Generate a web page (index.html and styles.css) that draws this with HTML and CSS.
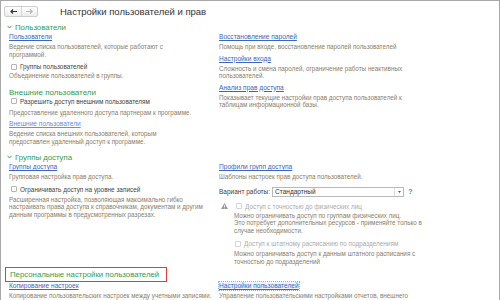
FILE: index.html
```html
<!DOCTYPE html>
<html lang="ru">
<head>
    <meta charset="UTF-8">
    <title>Настройки пользователей и прав</title>
    <link rel="stylesheet" href="styles.css">
</head>
<body>
    <div class="window">
        <!-- Top bar -->
        <div class="topbar">
            <div class="nav">
                <span class="nav-btn">
                    <svg width="7" height="5" viewBox="0 0 7 5"><path d="M7 2.5H1.5M3 0.5L1 2.5L3 4.5" fill="none" stroke="#333" stroke-width="1.2"/></svg>
                </span>
                <span class="nav-btn">
                    <svg width="7" height="5" viewBox="0 0 7 5"><path d="M0 2.5H5.5M4 0.5L6 2.5L4 4.5" fill="none" stroke="#b8b8b8" stroke-width="1.2"/></svg>
                </span>
            </div>
            <div class="title">Настройки пользователей и прав</div>
        </div>

        <!-- Users -->
        <div class="group">
            <div class="group-head">
                <svg class="chev" width="5" height="4" viewBox="0 0 5 4"><path d="M0.5 0.8L2.5 3L4.5 0.8" fill="none" stroke="#2e9e4f" stroke-width="0.9"/></svg>
                <span>Пользователи</span>
            </div>
            <div class="cols">
                <div class="col">
                    <a class="link">Пользователи</a>
                    <div class="desc">Ведение списка пользователей, которые работают с<br>программой.</div>
                    <label class="check"><span class="box"></span>Группы пользователей</label>
                    <div class="desc tight">Объединение пользователей в группы.</div>
                    <div class="subhead">Внешние пользователи</div>
                    <label class="check flush"><span class="box"></span>Разрешить доступ внешним пользователям</label>
                    <div class="desc mid">Предоставление удаленного доступа партнерам к программе.</div>
                    <a class="link light after-desc">Внешние пользователи</a>
                    <div class="desc">Ведение списка внешних пользователей, которым<br>предоставлен удаленный доступ к программе.</div>
                </div>
                <div class="col">
                    <a class="link">Восстановление паролей</a>
                    <div class="desc">Помощь при входе, восстановление паролей пользователей</div>
                    <a class="link after-desc">Настройки входа</a>
                    <div class="desc">Сложность и смена паролей, ограничение работы неактивных<br>пользователей.</div>
                    <a class="link after-desc">Анализ прав доступа</a>
                    <div class="desc">Показывает текущие настройки прав доступа пользователей к<br>таблицам информационной базы.</div>
                </div>
            </div>
        </div>

        <!-- Access groups -->
        <div class="group">
            <div class="group-head">
                <svg class="chev" width="5" height="4" viewBox="0 0 5 4"><path d="M0.5 0.8L2.5 3L4.5 0.8" fill="none" stroke="#2e9e4f" stroke-width="0.9"/></svg>
                <span>Группы доступа</span>
            </div>
            <div class="cols">
                <div class="col">
                    <a class="link">Группы доступа</a>
                    <div class="desc">Групповая настройка прав доступа.</div>
                    <label class="check"><span class="box"></span>Ограничивать доступ на уровне записей</label>
                    <div class="desc">Расширенная настройка, позволяющая максимально гибко<br>настраивать права доступа к справочникам, документам и другим<br>данным программы в предусмотренных разрезах.</div>
                </div>
                <div class="col">
                    <a class="link">Профили групп доступа</a>
                    <div class="desc">Шаблоны настроек прав доступа пользователей.</div>
                    <div class="field">
                        <span class="field-label">Вариант работы:</span>
                        <span class="combo">
                            <span class="combo-text">Стандартный</span>
                            <span class="combo-btn">
                                <svg width="3" height="2" viewBox="0 0 3 2"><path d="M0 0H3L1.5 2Z" fill="#555"/></svg>
                            </span>
                        </span>
                        <span class="help">?</span>
                    </div>
                    <label class="check warn-row">
                        <svg class="warn" width="7" height="6" viewBox="0 0 7 6"><path d="M3.5 0L7 6H0Z" fill="#9a9a9a"/><path d="M3.5 2V4M3.5 4.6V5.3" stroke="#fff" stroke-width="0.8"/></svg>
                        <span class="box off"></span><span class="off-text">Доступ с точностью до физических лиц</span>
                    </label>
                    <div class="desc indent tight">Можно ограничивать доступ по группам физических лиц.<br>Это потребует дополнительных ресурсов - применяйте только в<br>случае необходимости.</div>
                    <label class="check sub-row"><span class="box off"></span><span class="off-text">Доступ к штатному расписанию по подразделениям</span></label>
                    <div class="desc indent">Можно ограничивать доступ к данным штатного расписания с<br>точностью до подразделений</div>
                </div>
            </div>
        </div>

        <!-- Personal settings -->
        <div class="group">
            <div class="group-head focused">
                <svg class="chev" width="5" height="4" viewBox="0 0 5 4"><path d="M0.5 0.8L2.5 3L4.5 0.8" fill="none" stroke="#2e9e4f" stroke-width="0.9"/></svg>
                <span>Персональные настройки пользователей</span>
            </div>
            <div class="cols">
                <div class="col">
                    <a class="link">Копирование настроек</a>
                    <div class="desc">Копирование пользовательских настроек между учетными записями.</div>
                </div>
                <div class="col">
                    <a class="link selected">Настройки пользователей</a>
                    <div class="desc">Управление пользовательскими настройками отчетов, внешнего</div>
                </div>
            </div>
        </div>
    </div>
</body>
</html>
```

FILE: styles.css
```css
* {
    box-sizing: border-box;
    margin: 0;
    padding: 0;
}
body {
    font-family: "Liberation Sans", Arial, sans-serif;
    background-color: #ffffff;
    overflow: hidden;
    white-space: nowrap;
}
.window {
    width: 500px;
    height: 300px;
    border: 1px solid #a8a8a8;
    border-bottom: none;
    overflow: hidden;
}
.topbar {
    display: flex;
    align-items: center;
    height: 20px;
}
.nav {
    display: flex;
    margin-left: 3px;
    height: 11px;
    border: 1px solid #cdcdcd;
    border-radius: 2px;
    background: linear-gradient(#ffffff, #ececec);
}
.nav-btn {
    display: flex;
    align-items: center;
    justify-content: center;
    width: 16px;
}
.nav-btn + .nav-btn {
    border-left: 1px solid #d8d8d8;
}
.title {
    margin-left: 22px;
    font-size: 9.5px;
    color: #333333;
}
.group-head {
    display: flex;
    align-items: center;
    height: 12px;
    margin-left: 4px;
    padding-left: 1px;
    padding-right: 10px;
    border: 1px solid transparent;
    font-size: 7.8px;
    color: #2e9e4f;
    width: fit-content;
}
.group-head .chev {
    margin-right: 3px;
}
.group-head.focused {
    height: 15px;
    width: 162px;
    border-color: #e8393a;
}
.group + .group {
    margin-top: 6px;
}
.group:last-child {
    margin-top: 2px;
}
.cols {
    display: grid;
    grid-template-columns: 210px 1fr;
    padding-left: 8px;
}
.col {
    display: flex;
    flex-direction: column;
    align-items: flex-start;
}
.link {
    font-size: 6.6px;
    line-height: 8px;
    color: #3767bf;
    text-decoration: underline;
    cursor: pointer;
}
.link.light {
    color: #6a8fd4;
}
.link.after-desc {
    margin-top: 4px;
}
.link.selected {
    outline: 1px dotted #8fb0e6;
    background-color: #eef4ff;
}
.desc {
    margin-top: 2px;
    font-size: 6.3px;
    line-height: 7.5px;
    color: #8a7e6a;
}
.desc.tight {
    margin-top: 1px;
}
.desc.mid {
    margin-top: 3px;
}
.desc.indent {
    margin-left: 15px;
}
.check {
    display: flex;
    align-items: center;
    height: 9px;
    margin-top: 4px;
    margin-left: 2px;
    font-size: 6.4px;
    color: #444444;
}
.check.flush {
    margin-top: 0;
}
.box {
    width: 6px;
    height: 6px;
    margin-right: 3px;
    border: 1px solid #b4b4b4;
    border-radius: 1px;
    background-color: #ffffff;
}
.box.off {
    border-color: #d6d6d6;
}
.off-text {
    color: #ababab;
}
.warn-row {
    margin-top: 5px;
}
.warn {
    margin-right: 8px;
}
.sub-row {
    margin-top: 5px;
    margin-left: 16px;
}
.subhead {
    margin-top: 8px;
    font-size: 8px;
    line-height: 9px;
    color: #2e9e4f;
}
.field {
    display: flex;
    align-items: center;
    margin-top: 6px;
    height: 10px;
    font-size: 6.5px;
    color: #444444;
}
.field-label {
    margin-right: 2px;
}
.combo {
    display: flex;
    width: 132px;
    height: 10px;
    border: 1px solid #b9b9b9;
    background-color: #ffffff;
}
.combo-text {
    flex: 1;
    padding-left: 2px;
    line-height: 8px;
    color: #333333;
}
.combo-btn {
    display: flex;
    align-items: center;
    justify-content: center;
    width: 9px;
    border-left: 1px solid #dcdcdc;
}
.help {
    margin-left: 4px;
    font-size: 7.5px;
    font-weight: bold;
    color: #4c8ee0;
}
```
